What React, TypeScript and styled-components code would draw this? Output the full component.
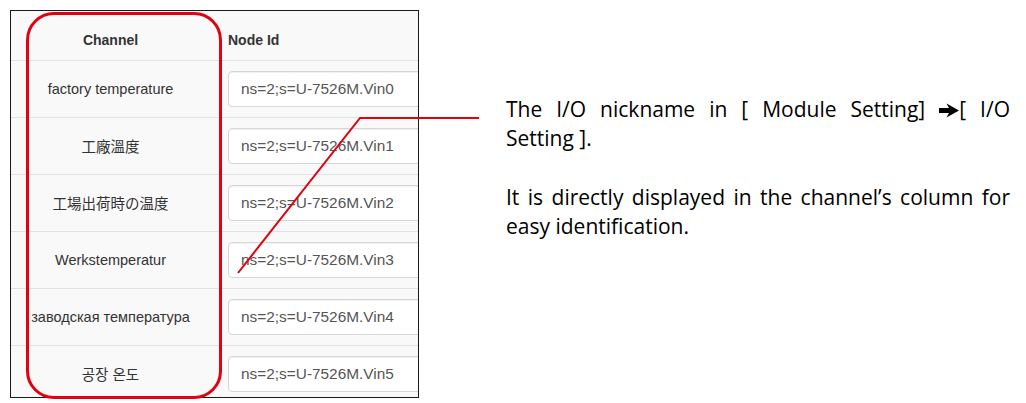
import styled, { createGlobalStyle } from 'styled-components'

const GlobalStyle = createGlobalStyle`
  html, body {
    margin: 0;
    padding: 0;
    background: #fff;
  }
`

const Page = styled.div`
  position: relative;
  display: flex;
  align-items: flex-start;
  width: 1026px;
  height: 403px;
  padding: 10px 0 0 10px;
  box-sizing: border-box;
  background: #fff;
  overflow: hidden;
`

const Shot = styled.div`
  flex: none;
  width: 409px;
  height: 388px;
  box-sizing: border-box;
  border: 1px solid #1a1a1a;
  background: #f9f9f9;
  overflow: hidden;
  font-family: 'Liberation Sans', Arial, 'Noto Sans CJK TC', sans-serif;
  font-size: 14px;
  color: #333;
`

const Row = styled.div<{ $head?: boolean }>`
  display: grid;
  grid-template-columns: 199px 1fr;
  align-items: ${p => (p.$head ? 'end' : 'center')};
  height: ${p => (p.$head ? '49px' : '57px')};
  padding-bottom: ${p => (p.$head ? '10px' : '0')};
  border-top: ${p => (p.$head ? 'none' : '1px solid #e2e2e2')};
  box-sizing: border-box;
`

const HeadCell = styled.div<{ $center?: boolean }>`
  font-weight: bold;
  line-height: 20px;
  text-align: ${p => (p.$center ? 'center' : 'left')};
  padding-left: ${p => (p.$center ? '0' : '18px')};
`

const Channel = styled.div`
  text-align: center;
  font-size: 14.5px;
  line-height: 20px;
  white-space: nowrap;

  &:lang(zh-TW) {
    font-family: 'Noto Sans CJK TC', sans-serif;
  }
  &:lang(ja) {
    font-family: 'Noto Sans CJK JP', sans-serif;
  }
  &:lang(ko) {
    font-family: 'Noto Sans CJK KR', sans-serif;
  }
`

const NodeInput = styled.input`
  display: block;
  width: 230px;
  height: 36px;
  margin-left: 18px;
  padding: 0 12px;
  box-sizing: border-box;
  border: 1px solid #d6d6d6;
  border-radius: 4px;
  background: #fff;
  box-shadow: inset 0 1px 1px rgba(0, 0, 0, 0.06);
  font-family: 'Liberation Sans', Arial, sans-serif;
  font-size: 15.4px;
  color: #555;
  outline: none;
`

const Note = styled.div`
  flex: none;
  width: 504px;
  margin: 85px 0 0 87px;
  font-family: 'Open Sans', 'Liberation Sans', sans-serif;
  font-size: 21px;
  line-height: 29.3px;
  color: #000;
`

const Para = styled.div`
  & + & {
    margin-top: 29.3px;
  }
`

const Line = styled.span<{ $justify?: boolean }>`
  display: block;
  white-space: nowrap;
  text-align: ${p => (p.$justify ? 'justify' : 'left')};
  text-align-last: ${p => (p.$justify ? 'justify' : 'left')};
`

const Arrow = styled.svg`
  display: inline-block;
  width: 20px;
  height: 15px;
  vertical-align: -1px;
`

const Highlight = styled.div`
  position: absolute;
  left: 26px;
  top: 12px;
  width: 196px;
  height: 387px;
  box-sizing: border-box;
  border: 3px solid #e3000f;
  border-radius: 28px;
  pointer-events: none;
`

const Callout = styled.svg`
  position: absolute;
  left: 0;
  top: 0;
  pointer-events: none;
`

const rows = [
  { name: 'factory temperature', lang: 'en' },
  { name: '工廠溫度', lang: 'zh-TW' },
  { name: '工場出荷時の温度', lang: 'ja' },
  { name: 'Werkstemperatur', lang: 'de' },
  { name: 'заводская температура', lang: 'ru' },
  { name: '공장 온도', lang: 'ko' },
]

export default function App() {
  return (
    <>
      <GlobalStyle />
      <Page>
        <Shot>
          <Row $head>
            <HeadCell $center>Channel</HeadCell>
            <HeadCell>Node Id</HeadCell>
          </Row>
          {rows.map((row, i) => (
            <Row key={i}>
              <Channel lang={row.lang}>{row.name}</Channel>
              <div>
                <NodeInput readOnly value={`ns=2;s=U-7526M.Vin${i}`} />
              </div>
            </Row>
          ))}
        </Shot>

        <Note>
          <Para>
            <Line $justify>
              The I/O nickname in [ Module Setting]{' '}
              <Arrow viewBox="0 0 20 15">
                <path d="M0 5 H10 L7.5 0.5 L20 7.5 L7.5 14.5 L10 10 H0 Z" fill="#000" />
              </Arrow>
              [ I/O
            </Line>
            <Line>Setting ].</Line>
          </Para>
          <Para>
            <Line $justify>It is directly displayed in the channel’s column for</Line>
            <Line>easy identification.</Line>
          </Para>
        </Note>

        <Highlight />
        <Callout width="1026" height="403" viewBox="0 0 1026 403">
          <polyline points="238,273 360,118 479,118" fill="none" stroke="#e3000f" strokeWidth="2" />
        </Callout>
      </Page>
    </>
  )
}
